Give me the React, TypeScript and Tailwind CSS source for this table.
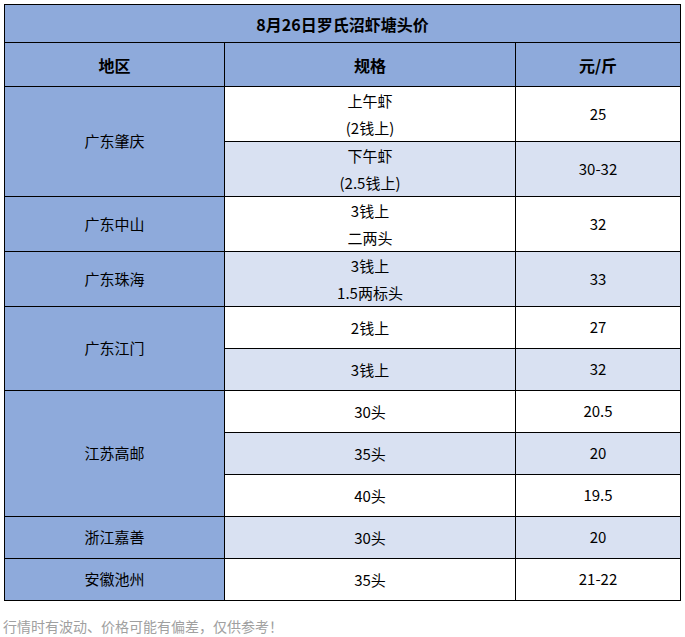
import React from 'react'

type Row = {
  region?: string
  span?: 1 | 2 | 3
  spec: React.ReactNode[]
  price: string
  light: boolean
}

// full-width parens keep their em box, like the original table font
const Paren = ({ text }: { text: string }) => (
  <span>
    <span className="inline-block w-[15px] text-right">(</span>
    {text}
    <span className="inline-block w-[15px] text-left">)</span>
  </span>
)

const rows: Row[] = [
  { region: '广东肇庆', span: 2, spec: ['上午虾', <Paren text="2钱上" />], price: '25', light: false },
  { spec: ['下午虾', <Paren text="2.5钱上" />], price: '30-32', light: true },
  { region: '广东中山', span: 1, spec: ['3钱上', '二两头'], price: '32', light: false },
  { region: '广东珠海', span: 1, spec: ['3钱上', '1.5两标头'], price: '33', light: true },
  { region: '广东江门', span: 2, spec: ['2钱上'], price: '27', light: false },
  { spec: ['3钱上'], price: '32', light: true },
  { region: '江苏高邮', span: 3, spec: ['30头'], price: '20.5', light: false },
  { spec: ['35头'], price: '20', light: true },
  { spec: ['40头'], price: '19.5', light: false },
  { region: '浙江嘉善', span: 1, spec: ['30头'], price: '20', light: true },
  { region: '安徽池州', span: 1, spec: ['35头'], price: '21-22', light: false },
]

const spanClass: Record<number, string> = {
  1: 'row-span-1',
  2: 'row-span-2',
  3: 'row-span-3',
}

export default function App() {
  return (
    <div
      className="min-h-[637px] bg-white text-black"
      style={{ fontFamily: '"Noto Sans CJK SC", "Noto Sans", sans-serif' }}
    >
      <div className="pl-[4px] pt-[4px]">
        <div className="grid w-[677px] grid-cols-[219px_290px_164px] grid-rows-[37px_43px_54px_54px_54px_54px_41px_41px_41px_41px_41px_41px_41px] gap-px bg-black p-px text-[15px]">
          {/* title */}
          <div className="col-span-3 flex items-center justify-center bg-[#8eaadb] text-[16px] font-bold">
            8月26日罗氏沼虾塘头价
          </div>

          {/* header */}
          <div className="flex items-center justify-center bg-[#8eaadb] text-[16px] font-bold">地区</div>
          <div className="flex items-center justify-center bg-[#8eaadb] text-[16px] font-bold">规格</div>
          <div className="flex items-center justify-center bg-[#8eaadb] text-[16px] font-bold">元/斤</div>

          {rows.map((r, i) => (
            <React.Fragment key={i}>
              {r.region && (
                <div
                  className={`${spanClass[r.span || 1]} flex items-center justify-center bg-[#8eaadb]`}
                >
                  {r.region}
                </div>
              )}
              <div
                className={`flex flex-col items-center justify-center leading-[27px] ${
                  r.light ? 'bg-[#d9e1f2]' : 'bg-white'
                }`}
              >
                {r.spec.map((s, j) => (
                  <span key={j}>{s}</span>
                ))}
              </div>
              <div
                className={`flex items-center justify-center ${
                  r.light ? 'bg-[#d9e1f2]' : 'bg-white'
                }`}
              >
                {r.price}
              </div>
            </React.Fragment>
          ))}
        </div>
      </div>

      <p className="mt-[15px] pl-[3px] text-[14px] text-[#a0a0a0]">
        行情时有波动、价格可能有偏差，仅供参考！
      </p>
    </div>
  )
}
